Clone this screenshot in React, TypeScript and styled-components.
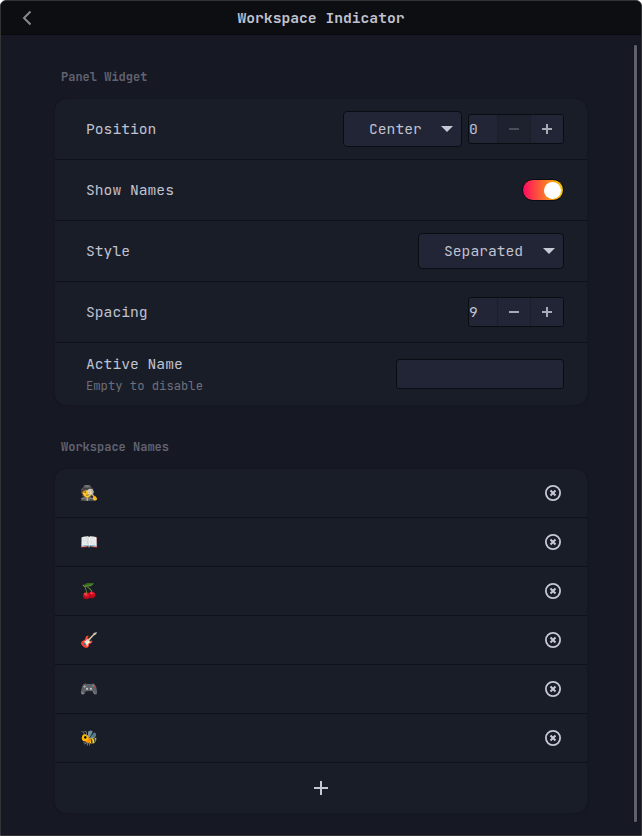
import React from "react";
import styled, { createGlobalStyle, css } from "styled-components";

const GlobalStyle = createGlobalStyle`
  * { box-sizing: border-box; }
  body {
    margin: 0;
    background: #fff;
    font-family: "JetBrains Mono", "DejaVu Sans Mono", "Liberation Mono", monospace;
    font-size: 14.667px;
    color: #c0c2d0;
  }
  button, input { font: inherit; color: inherit; }
`;

const Window = styled.div`
  display: flex;
  flex-direction: column;
  height: 836px;
  border: 1px solid #323335;
  border-radius: 6px 6px 0 0;
  background: #161824;
  overflow: hidden;
`;

const HeaderBar = styled.header`
  display: grid;
  grid-template-columns: 52px 1fr 52px;
  align-items: center;
  height: 34px;
  flex: none;
  background: #0d0e12;
  border-bottom: 1px solid #08090c;
`;

const BackButton = styled.button`
  display: grid;
  place-items: center;
  padding: 0;
  border: 0;
  background: none;
  color: #88898b;
`;

const Title = styled.h1`
  margin: 0;
  font-size: 14.667px;
  font-weight: 700;
  line-height: 20px;
  text-align: center;
`;

const Body = styled.div`
  display: flex;
  flex: 1;
  min-height: 0;
`;

const Content = styled.main`
  flex: 1;
  padding: 32px 0 0 54px;
`;

const ScrollGutter = styled.div`
  display: flex;
  justify-content: flex-end;
  width: 10px;
  padding: 9px 3px 12px 0;
`;

const ScrollThumb = styled.div`
  width: 5px;
  border: 1px solid #11131b;
  border-radius: 2px;
  background: #5f606b;
`;

const Group = styled.section`
  width: 532px;
  margin-bottom: 32px;
`;

const GroupTitle = styled.h2`
  margin: 0 0 12px;
  padding-left: 6px;
  font-size: 12px;
  font-weight: 700;
  line-height: 20px;
  color: #62636f;
`;

const Card = styled.div`
  border-radius: 12px;
  background: #191d28;
  box-shadow: 0 0 0 1px #151722, 0 1px 2px 1px #14152022;
  overflow: hidden;
`;

const Row = styled.div<{ $height: number }>`
  display: flex;
  align-items: center;
  justify-content: space-between;
  height: ${({ $height }) => $height}px;
  padding: 0 23px 0 31px;
  & + & { border-top: 1px solid #10121b; }
`;

const Label = styled.div`
  line-height: 20px;
`;

const LabelStack = styled.div`
  display: grid;
  row-gap: 2px;
  padding-top: 1px;
`;

const Hint = styled.div`
  font-size: 12.2px;
  line-height: 20px;
  color: #6e6f7b;
`;

const Controls = styled.div`
  display: flex;
  align-items: center;
  gap: 6px;
`;

const field = css`
  border: 1px solid #0b0c11;
  border-radius: 3px;
  background: #222535;
`;

const Dropdown = styled.button<{ $width: number }>`
  ${field}
  display: flex;
  align-items: center;
  justify-content: space-between;
  width: ${({ $width }) => $width}px;
  height: 36px;
  padding: 0 8px 0 25px;
  border-radius: 4px;
`;

const Choice = styled.span`
  padding-bottom: 2px;
`;

const Spinner = styled.div`
  ${field}
  display: grid;
  grid-template-columns: 28px 33px 33px;
  width: 96px;
  height: 30px;
  line-height: 27px;
  overflow: hidden;
`;

const StepButton = styled.button<{ $dim?: boolean }>`
  display: grid;
  place-items: center;
  height: 28px;
  padding: 0;
  border: 0;
  border-left: 1px solid #1c1e2b;
  background: ${({ $dim }) => ($dim ? "#1e212e" : "#222535")};
  color: ${({ $dim }) => ($dim ? "#4b4d5a" : "#a9aab5")};
`;

const Switch = styled.button`
  display: flex;
  justify-content: flex-end;
  width: 42px;
  height: 22px;
  padding: 2px 1px;
  border: 1px solid #0b0c11;
  border-radius: 11px;
  background: linear-gradient(90deg, #ff0a60, #f7c800 97%, #f0d000);
`;

const Knob = styled.span`
  width: 17px;
  height: 17px;
  margin: -0.5px 0.9px 0 0;
  border-radius: 50%;
  background: #fff;
`;

const TextField = styled.input`
  ${field}
  width: 168px;
  height: 30px;
`;

const NameRow = styled(Row)`
  padding: 0 26px 0 25px;
`;

const Emoji = styled.span`
  font-family: "Noto Color Emoji", sans-serif;
  font-size: 14.667px;
  line-height: 20px;
`;

const IconButton = styled.button`
  display: grid;
  place-items: center;
  padding: 0;
  border: 0;
  background: none;
  color: #c6c8d6;
`;

const AddRow = styled(Row)`
  justify-content: center;
  padding: 0;
`;

const Icon = styled.svg`
  display: block;
`;

const Plus = ({ size = 10 }: { size?: number }) => (
  <Icon width={size} height={size} viewBox={`0 0 ${size} ${size}`} stroke="currentColor" strokeWidth="2">
    <path d={`M0 ${size / 2}H${size}M${size / 2} 0V${size}`} />
  </Icon>
);

const Minus = () => (
  <Icon width="10" height="10" viewBox="0 0 10 10" stroke="currentColor" strokeWidth="2">
    <path d="M0 5H10" />
  </Icon>
);

const Caret = () => (
  <Icon width="12" height="6" viewBox="0 0 12 6" fill="#c6c8d6">
    <path d="M0 0H12L6 6Z" />
  </Icon>
);

const Remove = () => (
  <Icon width="16" height="16" viewBox="0 0 16 16" fill="none" stroke="currentColor">
    <circle cx="8" cy="8" r="7.1" strokeWidth="1.8" />
    <path d="M5.5 5.5L10.5 10.5M10.5 5.5L5.5 10.5" strokeWidth="2.1" />
  </Icon>
);

const Back = () => (
  <Icon width="10" height="16" viewBox="0 0 10 16" fill="none" stroke="currentColor" strokeWidth="2">
    <path d="M8.5 1.5L2 8L8.5 14.5" />
  </Icon>
);

const NumberSpinner = ({ value }: { value: number }) => (
  <Spinner>
    <span>{value}</span>
    <StepButton $dim={value === 0} aria-label="Decrease"><Minus /></StepButton>
    <StepButton aria-label="Increase"><Plus /></StepButton>
  </Spinner>
);

const names = ["🕵️", "📖", "🍒", "🎸", "🎮", "🐝"];

export default function App() {
  return (
    <>
      <GlobalStyle />
      <Window>
        <HeaderBar>
          <BackButton aria-label="Back"><Back /></BackButton>
          <Title>Workspace Indicator</Title>
        </HeaderBar>
        <Body>
          <Content>
            <Group>
              <GroupTitle>Panel Widget</GroupTitle>
              <Card>
                <Row $height={60}>
                  <Label>Position</Label>
                  <Controls>
                    <Dropdown $width={119}><Choice>Center</Choice><Caret /></Dropdown>
                    <NumberSpinner value={0} />
                  </Controls>
                </Row>
                <Row $height={61}>
                  <Label>Show Names</Label>
                  <Switch role="switch" aria-checked="true"><Knob /></Switch>
                </Row>
                <Row $height={61}>
                  <Label>Style</Label>
                  <Dropdown $width={146}><Choice>Separated</Choice><Caret /></Dropdown>
                </Row>
                <Row $height={61}>
                  <Label>Spacing</Label>
                  <NumberSpinner value={9} />
                </Row>
                <Row $height={63}>
                  <LabelStack>
                    <Label>Active Name</Label>
                    <Hint>Empty to disable</Hint>
                  </LabelStack>
                  <TextField aria-label="Active Name" />
                </Row>
              </Card>
            </Group>
            <Group>
              <GroupTitle>Workspace Names</GroupTitle>
              <Card>
                {names.map((name, i) => (
                  <NameRow key={name} $height={i === 0 ? 48 : 49}>
                    <Emoji>{name}</Emoji>
                    <IconButton aria-label="Remove"><Remove /></IconButton>
                  </NameRow>
                ))}
                <AddRow $height={51}>
                  <IconButton aria-label="Add"><Plus size={14} /></IconButton>
                </AddRow>
              </Card>
            </Group>
          </Content>
          <ScrollGutter><ScrollThumb /></ScrollGutter>
        </Body>
      </Window>
    </>
  );
}
